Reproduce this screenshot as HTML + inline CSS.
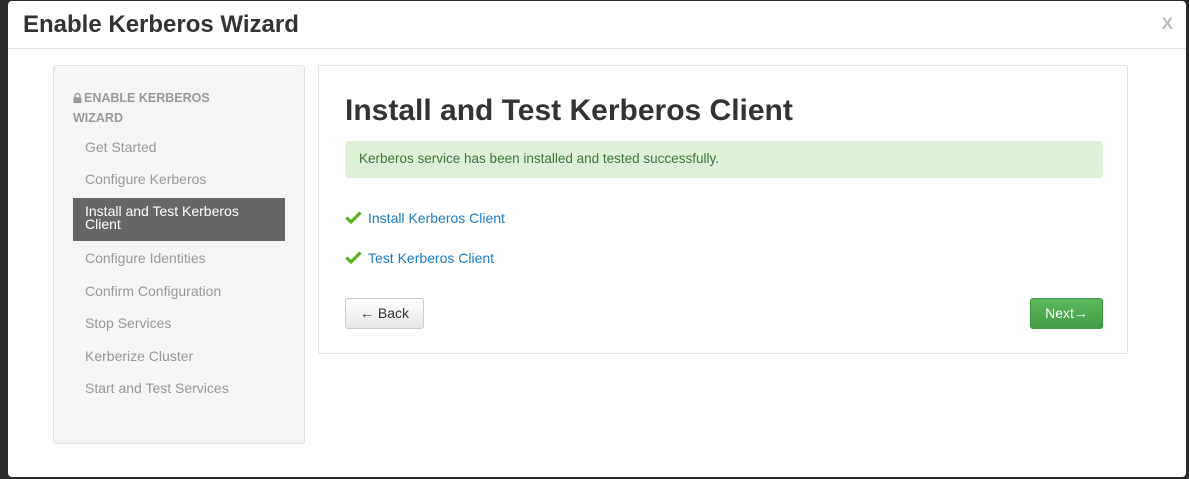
<!DOCTYPE html>
<html><head><style>
*{box-sizing:border-box;margin:0;padding:0}
body{width:1189px;height:479px;background:#2a2a2a;font-family:"Liberation Sans",Arial,sans-serif;position:relative;overflow:hidden}
.modal{position:absolute;left:8px;top:1px;width:1178px;height:476px;background:#fff;border-radius:4px}
.hdr{position:absolute;left:0;top:0;width:100%;height:48px;border-bottom:1px solid #e5e5e5}
.hdr h3{position:absolute;left:15px;top:10px;font-size:24px;font-weight:bold;color:#333}
.x{position:absolute;right:13px;top:13px;font-size:17px;color:#bbb;font-weight:bold}
.side{position:absolute;left:45px;top:64px;width:252px;height:379px;background:#f5f5f5;border:1px solid #e3e3e3;border-radius:3px}
.side .t{position:absolute;left:19px;top:22px;font-size:12.5px;font-weight:bold;color:#999;line-height:20px;width:160px}
.side .t svg{vertical-align:-1px;margin-right:2px}
.side .i{position:absolute;left:31px;font-size:14px;color:#999}
.side .a{position:absolute;left:19px;top:132px;width:212px;height:43px;background:#666;color:#fff;font-size:14px;padding:7px 12px;line-height:13px}
.main{position:absolute;left:310px;top:64px;width:810px;height:289px;border:1px solid #e3e3e3;border-radius:2px}
.main h2{position:absolute;left:26px;top:28px;font-size:30px;font-weight:bold;color:#333}
.ok{position:absolute;left:26px;top:75px;width:758px;height:37px;background:#dff0d8;border-radius:4px;color:#3c763d;font-size:13.5px;padding:10px 14px}
.lk{position:absolute;left:26px;font-size:14px;color:#1c7ec4}
.lk svg{vertical-align:-1px;margin-right:6px}
.back{position:absolute;left:26px;top:232px;width:79px;height:31px;border:1px solid #ccc;border-radius:3px;background:linear-gradient(#fff,#e6e6e6);font-size:14px;color:#333;text-align:center;line-height:29px}
.next{position:absolute;left:711px;top:232px;width:73px;height:31px;border-radius:3px;background:linear-gradient(#5cb85c,#449d44);border:1px solid #419641;color:#fff;font-size:14px;text-align:center;line-height:29px}
</style></head><body>
<div class="modal">
<div class="hdr"><h3>Enable Kerberos Wizard</h3><span class="x">X</span></div>
<div class="side">
<div class="t"><svg width="9" height="10" viewBox="0 0 9 10"><path d="M2 4.5V3a2.5 2.5 0 0 1 5 0v1.5" fill="none" stroke="#999" stroke-width="1.4"/><rect x="0.5" y="4.5" width="8" height="5.5" rx="1" fill="#999"/></svg>ENABLE KERBEROS WIZARD</div>
<div class="i" style="top:73px">Get Started</div>
<div class="i" style="top:105px">Configure Kerberos</div>
<div class="a">Install and Test Kerberos Client</div>
<div class="i" style="top:184px">Configure Identities</div>
<div class="i" style="top:217px">Confirm Configuration</div>
<div class="i" style="top:249px">Stop Services</div>
<div class="i" style="top:282px">Kerberize Cluster</div>
<div class="i" style="top:314px">Start and Test Services</div>
</div>
<div class="main">
<h2>Install and Test Kerberos Client</h2>
<div class="ok">Kerberos service has been installed and tested successfully.</div>
<div class="lk" style="top:144px"><svg width="17" height="13" viewBox="0 0 17 13"><path d="M1.5 6.5l4.5 4.5L15.5 1.5" fill="none" stroke="#5ab021" stroke-width="3.2"/></svg>Install Kerberos Client</div>
<div class="lk" style="top:184px"><svg width="17" height="13" viewBox="0 0 17 13"><path d="M1.5 6.5l4.5 4.5L15.5 1.5" fill="none" stroke="#5ab021" stroke-width="3.2"/></svg>Test Kerberos Client</div>
<div class="back">&larr; Back</div>
<div class="next">Next&rarr;</div>
</div>
</div>
</body></html>
